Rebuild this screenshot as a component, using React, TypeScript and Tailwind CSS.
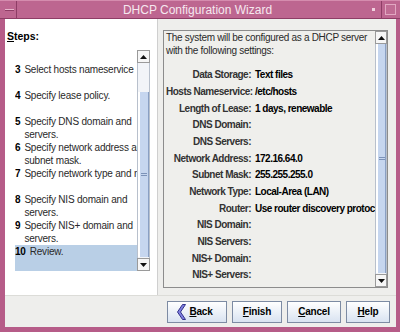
import React from "react";

function ArrowBtn({ dir }: { dir: "up" | "down" }) {
  return (
    <div className="h-[13px] shrink-0 bg-[#f6f6f6] border border-[#9a9a9a] flex items-center justify-center">
      <svg width="7" height="4" viewBox="0 0 7 4">
        {dir === "up" ? (
          <polygon points="0,4 3.5,0 7,4" fill="#111" />
        ) : (
          <polygon points="0,0 3.5,4 7,0" fill="#111" />
        )}
      </svg>
    </div>
  );
}

function ScrollBar({ top, thumb, className }: { top: number; thumb: number; className: string }) {
  return (
    <div className={"flex flex-col shrink-0 " + className}>
      <ArrowBtn dir="up" />
      <div className="flex-1 flex flex-col bg-[#f2f4f8] border-x border-[#b8c0cc]">
        <div style={{ height: top }} className="shrink-0" />
        <div
          style={{ height: thumb }}
          className="shrink-0 bg-[#c6d6ef] border-l-2 border-l-white border-r border-r-[#8aa0c4] flex items-center justify-center"
        >
          <div className="flex flex-col gap-[1px]">
            <div className="w-[6px] h-[1px] bg-[#7c92b8]" />
            <div className="w-[6px] h-[1px] bg-[#7c92b8]" />
          </div>
        </div>
      </div>
      <ArrowBtn dir="down" />
    </div>
  );
}

type Item = { n?: string; lines: string[]; sel?: boolean };

const items: Item[] = [
  { lines: [""] },
  { n: "3", lines: ["Select hosts nameservice", ""] },
  { n: "4", lines: ["Specify lease policy.", ""] },
  { n: "5", lines: ["Specify DNS domain and", "servers."] },
  { n: "6", lines: ["Specify network address and", "subnet mask."] },
  { n: "7", lines: ["Specify network type and router", ""] },
  { n: "8", lines: ["Specify NIS domain and", "servers."] },
  { n: "9", lines: ["Specify NIS+ domain and", "servers."] },
  { n: "10", lines: ["Review.", ""], sel: true },
];

const rows: [string, string][] = [
  ["Data Storage:", "Text files"],
  ["Hosts Nameservice:", "/etc/hosts"],
  ["Length of Lease:", "1 days, renewable"],
  ["DNS Domain:", ""],
  ["DNS Servers:", ""],
  ["Network Address:", "172.16.64.0"],
  ["Subnet Mask:", "255.255.255.0"],
  ["Network Type:", "Local-Area (LAN)"],
  ["Router:", "Use router discovery protocol"],
  ["NIS Domain:", ""],
  ["NIS Servers:", ""],
  ["NIS+ Domain:", ""],
  ["NIS+ Servers:", ""],
];

function Btn({ w, children }: { w: string; children: React.ReactNode }) {
  return (
    <div
      className={
        "h-[22px] border border-[#7d8ba3] bg-gradient-to-b from-white to-[#d9e3f1] flex items-center justify-center font-bold text-black tracking-[-0.2px] " +
        w
      }
    >
      {children}
    </div>
  );
}

export default function App() {
  return (
    <div className="w-[400px] h-[332px] bg-[#b65c88] flex flex-col overflow-hidden font-['Liberation_Sans',Arial,sans-serif] text-[10px] text-black leading-none">
      {/* Title bar */}
      <div className="h-[19px] shrink-0 flex items-stretch border-t border-t-[#d58cae] border-b border-b-[#8e3d66] bg-[#bd6690]">
        <div className="w-[17px] flex items-center justify-center border-r border-r-[#8e3d66] pl-[2px]">
          <div className="w-[9px] h-[2px] bg-[#e7b6cc] border-b border-b-[#8e3d66]" />
        </div>
        <div className="flex-1 flex items-center justify-center text-[12px] text-[#f6e8ef] pl-[10px]">
          DHCP Configuration Wizard
        </div>
        <div className="w-[10px] flex items-center justify-center">
          <div className="w-[3px] h-[3px] bg-[#f0d0de]" />
        </div>
        <div className="w-[4px] border-r border-r-[#8e3d66]" />
        <div className="w-[16px] flex items-center justify-center">
          <div className="w-[11px] h-[11px] border border-[#e2a8c2] bg-[#c06c94]" />
        </div>
        <div className="w-[2px]" />
      </div>

      {/* Body */}
      <div className="flex-1 ml-[5px] mr-[4px] mb-[5px] flex flex-col bg-[#eeeeec] min-w-0">
        <div className="h-[276px] flex shrink-0 min-w-0">
          {/* Left steps panel */}
          <div className="w-[153px] shrink-0 bg-white border-r border-r-[#cfcfcf] flex flex-col pl-[10px] pr-[7px]">
            <div className="h-[31px] flex items-center font-bold text-[10.5px] -ml-[8px] pt-[3px]">
              <span className="underline">S</span>teps:
            </div>
            <div className="h-[221px] flex min-w-0">
              <div className="flex-1 min-w-0 overflow-hidden flex flex-col tracking-[-0.2px]">
                {items.map((it, i) => (
                  <div key={i} className={"flex whitespace-nowrap " + (it.sel ? "bg-[#b9cfe6]" : "")}>
                    {it.n && <span className="font-bold leading-[13px] mr-[4px]">{it.n}</span>}
                    <div className="flex flex-col text-[#2a2a2a]">
                      {it.lines.map((l, j) => (
                        <div key={j} className="h-[13px] leading-[13px]">
                          {l}
                        </div>
                      ))}
                    </div>
                  </div>
                ))}
              </div>
              <ScrollBar className="w-[13px]" top={29} thumb={165} />
            </div>
          </div>

          {/* Right summary panel */}
          <div className="flex-1 min-w-0 pt-[11px] pl-[5px] pr-[8px] pb-[7px] flex">
            <div className="flex-1 min-w-0 border border-[#8c8c8c] bg-[#efefec] flex">
              <div className="flex-1 min-w-0 overflow-hidden flex flex-col pl-[2px] whitespace-nowrap">
                <div className="leading-[13px] text-[#2a2a2a] tracking-[-0.3px]">
                  <div className="h-[13px]">The system will be configured as a DHCP server</div>
                  <div className="h-[13px]">with the following settings:</div>
                </div>
                <div className="h-[10px] shrink-0" />
                {rows.map(([k, v], i) => (
                  <div key={i} className="h-[16.67px] flex items-center shrink-0 font-bold tracking-[-0.5px]">
                    <div className="w-[85px] shrink-0 text-right text-[#333]">{k}</div>
                    <div className="ml-[4px] text-black">{v}</div>
                  </div>
                ))}
              </div>
              <ScrollBar className="w-[12px]" top={0} thumb={229} />
            </div>
          </div>
        </div>

        {/* Button bar */}
        <div className="flex-1 border-t border-t-[#dcdcd8] flex items-start justify-end gap-[5px] pt-[5px] pr-[6px]">
          <Btn w="w-[60px]">
            <div className="flex items-center gap-[2px] -ml-[4px]">
              <svg width="10" height="16" viewBox="0 0 10 16">
                <polygon
                  points="8.5,0.5 3.5,8 8.5,15.5 5.5,15.5 0.5,8 5.5,0.5"
                  fill="#7f7fe0"
                  stroke="#33338a"
                  strokeWidth="1"
                />
              </svg>
              <span>
                <span className="underline">B</span>ack
              </span>
            </div>
          </Btn>
          <Btn w="w-[50px]">
            <span>
              <span className="underline">F</span>inish
            </span>
          </Btn>
          <Btn w="w-[54px]">
            <span>
              <span className="underline">C</span>ancel
            </span>
          </Btn>
          <Btn w="w-[44px]">
            <span>
              <span className="underline">H</span>elp
            </span>
          </Btn>
        </div>
      </div>
    </div>
  );
}
